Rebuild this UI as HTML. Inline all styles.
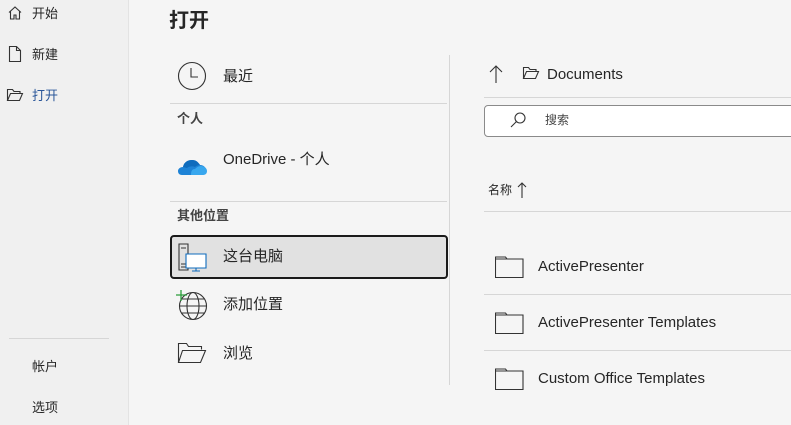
<!DOCTYPE html>
<html><head><meta charset="utf-8"><style>
*{margin:0;padding:0;box-sizing:border-box}
body{width:791px;height:425px;overflow:hidden;background:#f5f5f5;font-family:"Liberation Sans","Noto Sans CJK SC",sans-serif;color:#262626;position:relative}
.a{position:absolute;white-space:nowrap}
.side{position:absolute;left:0;top:0;width:129px;height:425px;background:#f0f0f0;border-right:1px solid #e3e3e3}
.t13{font-size:13px;line-height:16px}
.t15{font-size:15px;line-height:18px}
.hr{position:absolute;height:1px;background:#d6d6d6}
svg{position:absolute}
</style></head><body>
<div class="side"></div>
<svg style="left:7px;top:5px" width="16" height="16" viewBox="0 0 16 16" fill="none" stroke="#333" stroke-width="1.1"><path d="M2 7.5L8 2l6 5.5M3.5 6.5V14h3.5v-4h2v4h3.5V6.5"/></svg>
<div class="a t13" style="left:32px;top:6px">开始</div>
<svg style="left:8px;top:45px" width="14" height="18" viewBox="0 0 14 18" fill="none" stroke="#333" stroke-width="1.1"><path d="M1.5 1.5h7l4 4v11h-11z M8.5 1.5v4h4"/></svg>
<div class="a t13" style="left:32px;top:47px">新建</div>
<svg style="left:6px;top:88px" width="18" height="14" viewBox="0 0 18 14" fill="none" stroke="#333" stroke-width="1.1"><path d="M1.5 12.5V1.5h5l1.5 2h6v2M1.5 12.5l3-7h12l-3 7z"/></svg>
<div class="a t13" style="left:32px;top:88px;color:#2b579a">打开</div>
<div class="hr" style="left:9px;top:338px;width:100px"></div>
<div class="a t13" style="left:32px;top:359px">帐户</div>
<div class="a t13" style="left:32px;top:400px">选项</div>

<div class="a" style="left:169px;top:9px;font-size:20px;font-weight:bold;line-height:24px">打开</div>

<svg style="left:177px;top:61px" width="30" height="30" viewBox="0 0 30 30" fill="none" stroke="#333" stroke-width="1.1"><circle cx="15" cy="15" r="13.5"/><path d="M14 7v9h7"/></svg>
<div class="a t15" style="left:223px;top:68px">最近</div>
<div class="hr" style="left:170px;top:103px;width:277px"></div>
<div class="a t13" style="left:177px;top:111px;font-weight:bold;color:#444">个人</div>
<svg style="left:177px;top:155px" width="30" height="22" viewBox="0 0 30 22"><path d="M5 20c-3 0-4-2-4-4s2-4 5-4c1-5 5-7 9-7s6 2 8 5c4 0 6 3 6 5s-1 5-4 5z" fill="#1e83d6"/><path d="M6 12c1-5 5-7 9-7s6 2 8 5c-2 0-4 1-5 2-2-1-6-1-8 1z" fill="#0f6cbd"/><path d="M14 20h12c3 0 4-2 4-4 0-3-3-5-6-5s-5 2-6 3c-3 0-4 2-4 6z" fill="#38a7ee"/></svg>
<div class="a t15" style="left:223px;top:151px">OneDrive - 个人</div>
<div class="hr" style="left:170px;top:201px;width:277px"></div>
<div class="a t13" style="left:177px;top:208px;font-weight:bold;color:#444">其他位置</div>
<div class="a" style="left:170px;top:235px;width:278px;height:44px;background:#e1e1e1;border:2px solid #1a1a1a;border-radius:4px"></div>
<svg style="left:177px;top:243px" width="32" height="30" viewBox="0 0 32 30" fill="none" stroke-width="1.1"><path d="M2 1h9v26H2z M4 5h5 M4 21h5 M4 24h5" stroke="#333"/><path d="M9 11h20v14H9z" stroke="#0f6cbd" fill="#fff"/><path d="M19 25v3M15 28h8" stroke="#0f6cbd"/></svg>
<div class="a t15" style="left:223px;top:248px">这台电脑</div>
<svg style="left:175px;top:289px" width="34" height="32" viewBox="0 0 34 32" fill="none" stroke-width="1.1"><circle cx="18" cy="17" r="13.5" stroke="#333"/><ellipse cx="18" cy="17" rx="6" ry="13.5" stroke="#333"/><path d="M4.5 17h27M6 10h24M6 24h24" stroke="#333"/><path d="M6 1v11M1 6h11" stroke="#2a9d3a" stroke-width="1.3"/></svg>
<div class="a t15" style="left:223px;top:296px">添加位置</div>
<svg style="left:177px;top:342px" width="30" height="22" viewBox="0 0 30 22" fill="none" stroke="#333" stroke-width="1.1"><path d="M1.5 20.5V1.5h8l2 3h13v3M1.5 20.5l4-12h23l-5 12z"/></svg>
<div class="a t15" style="left:223px;top:345px">浏览</div>

<div class="a" style="left:449px;top:55px;width:1px;height:330px;background:#d6d6d6"></div>

<svg style="left:489px;top:64px" width="14" height="20" viewBox="0 0 14 20" fill="none" stroke="#333" stroke-width="1.1"><path d="M7 19V2M1 8l6-6 6 6"/></svg>
<svg style="left:522px;top:66px" width="18" height="14" viewBox="0 0 18 14" fill="none" stroke="#333" stroke-width="1.1"><path d="M1.5 12.5V1.5h5l1.5 2h6v2M1.5 12.5l3-7h12l-3 7z"/></svg>
<div class="a t15" style="left:547px;top:66px">Documents</div>
<div class="hr" style="left:484px;top:97px;width:307px"></div>
<div class="a" style="left:484px;top:105px;width:320px;height:32px;background:#fff;border:1px solid #8a8a8a;border-radius:4px"></div>
<svg style="left:509px;top:111px" width="18" height="18" viewBox="0 0 18 18" fill="none" stroke="#333" stroke-width="1.1"><circle cx="11" cy="7" r="5"/><path d="M7.5 10.5L2 16"/></svg>
<div class="a" style="left:545px;top:113px;font-size:12px;line-height:15px;color:#444">搜索</div>
<div class="a" style="left:488px;top:183px;font-size:12px;line-height:15px">名称</div>
<svg style="left:517px;top:181px" width="10" height="18" viewBox="0 0 10 18" fill="none" stroke="#333" stroke-width="1.1"><path d="M5 17V2M1 6l4-4 4 4"/></svg>
<div class="hr" style="left:484px;top:211px;width:307px"></div>

<svg style="left:495px;top:256px" width="29" height="22" viewBox="0 0 29 22" fill="none" stroke="#333" stroke-width="1.1"><path d="M0.5 21.5V1h10l1.5 2h16v18.5z M0.5 3h11"/></svg>
<div class="a t15" style="left:538px;top:258px">ActivePresenter</div>
<div class="hr" style="left:484px;top:294px;width:307px"></div>
<svg style="left:495px;top:312px" width="29" height="22" viewBox="0 0 29 22" fill="none" stroke="#333" stroke-width="1.1"><path d="M0.5 21.5V1h10l1.5 2h16v18.5z M0.5 3h11"/></svg>
<div class="a t15" style="left:538px;top:314px">ActivePresenter Templates</div>
<div class="hr" style="left:484px;top:350px;width:307px"></div>
<svg style="left:495px;top:368px" width="29" height="22" viewBox="0 0 29 22" fill="none" stroke="#333" stroke-width="1.1"><path d="M0.5 21.5V1h10l1.5 2h16v18.5z M0.5 3h11"/></svg>
<div class="a t15" style="left:538px;top:370px">Custom Office Templates</div>
</body></html>
